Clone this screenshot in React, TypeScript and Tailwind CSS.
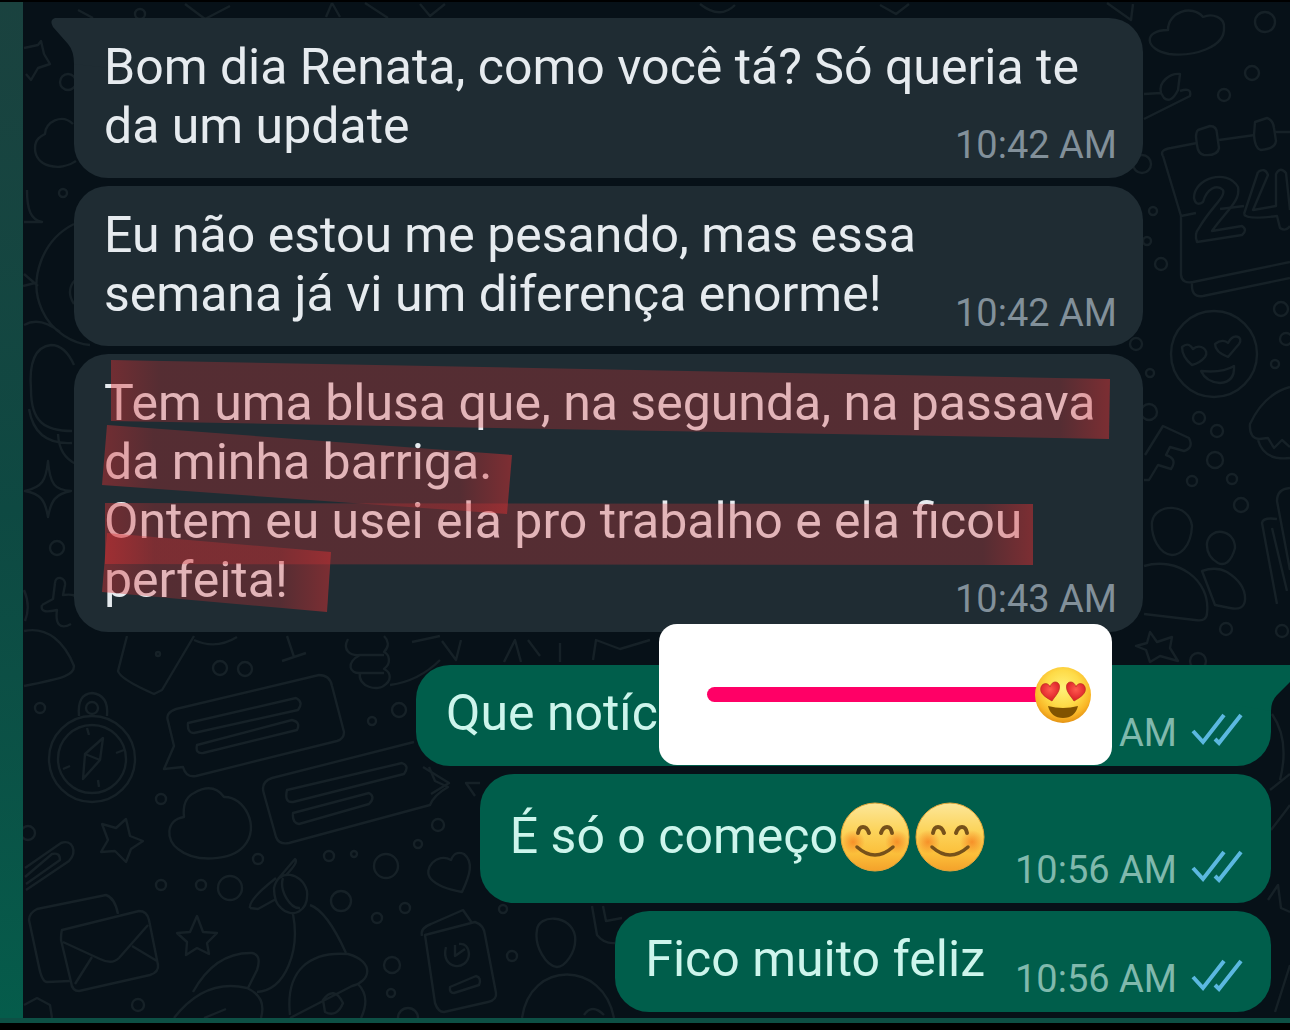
import React from "react";

function CheckMarks() {
  return (
    <svg viewBox="0 0 52 34" className="mb-[9px] h-[34px] w-[52px] shrink-0" fill="none" stroke="#5bb8e0" strokeWidth="4" aria-label="Lida" role="img">
      <path d="M2 18 L12 29 L33 2" />
      <path d="M24 26 L28 30 L50 2" />
    </svg>
  );
}

function Smile() {
  return (
    <svg viewBox="0 0 70 70" className="h-[70px] w-[70px] shrink-0" role="img" aria-label="Sorriso">
      <defs>
        <linearGradient id="face" x1="0" y1="0" x2="0" y2="1">
          <stop offset="0" stopColor="#fce79a" />
          <stop offset=".4" stopColor="#fcd45c" />
          <stop offset=".75" stopColor="#fbbf3a" />
          <stop offset="1" stopColor="#f4a12a" />
        </linearGradient>
        <radialGradient id="cheek">
          <stop offset="0" stopColor="#f58220" stopOpacity=".8" />
          <stop offset="1" stopColor="#f58220" stopOpacity="0" />
        </radialGradient>
      </defs>
      <circle cx="35" cy="35" r="34" fill="url(#face)" stroke="#e2a63a" strokeWidth="1" />
      <circle cx="13" cy="40" r="12" fill="url(#cheek)" />
      <circle cx="57" cy="40" r="12" fill="url(#cheek)" />
      <g fill="none" stroke="#76511a" strokeLinecap="round">
        <path d="M18 31 Q19 25 23 25 Q27 25 29 31" strokeWidth="4" />
        <path d="M41 31 Q43 25 47 25 Q51 25 52 31" strokeWidth="4" />
        <path d="M17 45 Q35 61 53 45" strokeWidth="3.5" />
      </g>
    </svg>
  );
}

function HeartEyes() {
  return (
    <svg viewBox="0 0 56 56" className="pointer-events-none absolute top-1/2 right-[21px] h-[56px] w-[56px] -translate-y-1/2" aria-hidden="true">
      <defs>
        <radialGradient id="love" cx=".5" cy=".38" r=".64">
          <stop offset="0" stopColor="#fff27a" />
          <stop offset=".5" stopColor="#fedb48" />
          <stop offset=".8" stopColor="#f9b526" />
          <stop offset="1" stopColor="#e08c10" />
        </radialGradient>
        <radialGradient id="heart" cx=".5" cy=".4">
          <stop offset="0" stopColor="#ff5a4e" />
          <stop offset="1" stopColor="#e0262c" />
        </radialGradient>
      </defs>
      <circle cx="28" cy="28" r="28" fill="url(#love)" />
      <path d="M17 34 C10 30 4 26 6 20 C8 15 14 16 15 20 C17 13 24 14 24.500 19 C25 25 20 29 17 34Z" fill="url(#heart)" stroke="#b92b20" strokeWidth=".7" />
      <path d="M39 34 C46 30 52 26 50 20 C48 15 42 16 41 20 C39 13 32 14 31.500 19 C31 25 36 29 39 34Z" fill="url(#heart)" stroke="#b92b20" strokeWidth=".7" />
      <path d="M13 39 Q28 43 43 39 Q40 51 28 51 Q16 51 13 39Z" fill="#805300" />
    </svg>
  );
}

const dots: [number, number, number][] = [
  [68, 82, 9], [63, 193, 5], [57, 548, 8], [220, 668, 8], [245, 669, 8], [40, 708, 6], [372, 721, 5], [399, 710, 8],
  [161, 799, 6], [28, 833, 8], [161, 885, 6], [201, 885, 6], [230, 888, 13], [258, 859, 6], [329, 856, 6], [354, 854, 4],
  [386, 866, 13], [341, 901, 11], [377, 918, 6], [405, 908, 6], [392, 965, 9], [391, 993, 5], [138, 1005, 7], [408, 1018, 11],
  [438, 825, 7], [418, 844, 5], [503, 909, 5], [512, 956, 6], [1265, 22, 11], [1252, 73, 8], [1224, 95, 7],
  [1142, 164, 10], [1153, 211, 5], [1147, 241, 5], [1161, 264, 7], [1281, 309, 8], [1136, 344, 7], [1150, 373, 5],
  [1275, 364, 5], [1149, 412, 9], [1199, 418, 7], [1217, 431, 7], [1215, 460, 9], [1192, 481, 6], [1232, 479, 6],
  [1241, 505, 8], [1226, 629, 7], [1282, 631, 7], [1198, 661, 9], [1286, 339, 7], [158, 654, 3], [140, 14, 6],
];

const shapes = [
  // star, cloud, crescent and arcs along the left edge
  "M24 48 L38 45 L41 41 L44 54 L50 64 L38 68 L31 80 L26 74",
  "M76 161 C60 172 35 167 35 148 C35 139 41 136 45 134 C45 122 62 113 73 124",
  "M27 190 C27 210 31 220 42 222 H24 M74 224 C42 240 28 280 42 310 C52 333 75 344 90 345 M23 286 L35 283 M24 274 L38 286 M24 325 Q40 316 60 332 M76 279 Q65 290 74 304",
  "M74 365 Q65 345 51 345 C34 347 29 365 31 390 C31 422 45 431 72 431 M29 409 Q35 445 72 443 M58 434 Q59 456 76 464",
  "M48 461 C50 485 55 490 71 491 C55 494 51 501 48 517 C45 499 40 494 25 491 C42 487 46 481 48 461Z",
  "M55 583 C55 575 66 577 65 585 L63 595 C73 594 77 595 76 600 M42 605 C40 613 48 612 57 610 C55 624 60 630 71 624 M42 605 L53 599 L55 583 M24 590 Q31 606 25 621",
  "M24 631 C48 626 65 643 74 666 C74 675 65 678 24 686 M127 636 L118 671 Q120 679 154 694 L162 690 L194 636 M194 640 Q216 650 237 637 M287 636 L294 657 M282 661 L306 653",
  "M348 639 C342 650 350 656 360 655 C345 663 350 674 360 673 C357 686 378 693 386 684 C393 678 389 671 384 669 C392 663 389 654 384 652 C390 646 388 640 384 636 M360 655 H384 M360 673 H384 M390 685 Q419 681 440 660 M412 642 L440 636",
  // top edge
  "M78 10 L93 18 M185 4 L205 19 L230 6 M332 3 L326 17 M332 3 L340 17 M365 3 L388 18 M1107 3 L1131 20 L1133 4 M420 4 L430 16 L445 4 M700 4 Q720 20 735 5 M880 5 L896 14 L909 4",
  // compass
  "M79 716 Q77 694 92 693 Q109 695 107 716",
  "M103 738 L100 760 L83 779 L85 754Z M85 754 L100 760 M87 728 L89 735 M124 750 L116 753 M99 787 L98 780 M63 769 L70 766",
  // speech bubbles
  "M168 721 Q165 713 176 709 L319 675 Q330 675 332 686 L344 732 Q344 739 337 741 L196 776 Q186 778 183 767 L164 769 L174 746Z",
  "M188 723 L296 698 Q304 702 298 710 L194 733 Q187 733 188 723Z M197 745 L292 720 Q301 722 297 730 L203 753 Q195 754 197 745Z",
  "M414 742 L272 778 Q260 782 264 794 L276 837 Q279 845 289 843 L430 805 Q434 795 448 787 L435 781 L429 767",
  "M287 790 L402 763 Q410 766 404 774 L293 802 Q284 803 287 790Z M293 813 L369 793 Q376 797 369 804 L299 824 Q292 823 293 813Z",
  "M184 817 C165 820 166 841 178 849 C195 863 231 861 244 846 C261 827 244 796 224 797 Q213 782 194 793 C184 798 183 808 184 817Z",
  "M126 819 L130 836 L143 841 L131 849 L126 862 L115 851 L101 852 L108 840 L102 824 L116 828Z",
  "M197 916 L203 932 L217 933 L207 943 L209 954 L197 948 L186 955 L187 942 L177 933 L190 932Z",
  "M25 868 L61 843 C72 839 78 851 69 861 L26 890 M25 877 L52 854 Q60 852 60 860 L26 884",
  // envelope
  "M70 981 L47 982 Q42 982 39 967 L29 920 Q29 913 37 909 L106 895 Q115 898 118 914",
  "M62 930 L139 911 Q147 911 149 920 L158 965 Q159 972 150 975 L79 991 Q72 991 71 982 L61 940 Q61 933 62 930Z M63 942 L100 959 Q112 965 119 958 L148 925 M75 984 L92 957 M132 946 L157 961",
  // microphone, figures and notebook
  "M250 908 Q248 900 276 878 M250 908 L258 909 L276 899 M278 879 L295 859 Q299 862 286 875 M274 888 C278 868 302 872 307 891 C309 912 292 919 281 908 C276 904 274 898 274 888Z M283 878 C279 890 290 909 300 908 M293 914 C300 950 286 990 257 992 M310 905 Q327 911 346 953",
  "M174 1018 Q205 978 247 988 Q267 997 261 1018 M193 992 Q215 952 252 953 Q262 955 257 970 L248 988 M204 1018 L226 1009 M290 1015 C285 970 310 951 348 954 C376 962 370 982 352 986 L290 1018 M358 984 Q371 997 361 1018 M323 1000 Q334 985 343 1003 Q337 1018 325 1012Z",
  "M422 936 Q420 928 431 924 L463 910 L472 923 M425 935 L475 922 Q484 925 485 935 L496 993 Q497 1000 488 1002 L444 1012 Q438 1012 435 1003Z M450 987 L476 976 Q482 978 479 985 L454 993 Q449 993 450 987Z M446 947 C440 970 468 972 469 954 Q468 943 459 944 M455 945 V956 L465 949",
  "M537 930 C538 914 571 914 575 936 C577 953 564 967 557 967 C546 966 534 946 537 930Z M522 1018 C530 960 603 960 614 1018 M584 1015 Q592 1003 604 1015",
  "M451 860 C437 852 422 869 431 879 Q439 888 462 892 C470 875 474 862 464 854 Q455 850 451 860Z",
  "M592 906 L597 935 Q604 944 615 943 M603 906 L606 921 L622 918 M423 767 L449 783 L431 794 M480 783 H466 L475 796",
  "M24 1005 L37 998 L50 1005 L52 1018 M442 641 L456 660 L461 640 M504 662 L515 640 L521 662 M528 640 L540 656 M560 643 V662 M593 660 L596 640 L620 649 L650 640",
  // cloud, leaf and calendar
  "M1168 30 C1142 30 1145 50 1169 54 C1194 57 1225 47 1224 28 C1225 17 1212 13 1203 17 C1192 4 1168 12 1168 30Z",
  "M1144 94 L1161 93 C1158 82 1170 73 1180 74 L1178 90 Q1171 104 1164 98 L1161 93 M1180 91 Q1192 87 1190 96 L1144 119",
  "M1163 156 Q1159 150 1171 148 L1197 143 M1219 140 L1255 135 M1275 132 H1290 M1163 156 L1181 216 V275 Q1182 284 1193 282 L1290 262 M1192 283 Q1191 298 1203 296 L1290 278 M1181 216 L1196 213 M1220 209 L1244 206",
  "M1198 130 L1210 126 Q1217 126 1217 134 L1219 148 Q1218 156 1204 155 Q1198 154 1197 145 L1196 137 Q1196 132 1198 130Z M1255 122 L1267 118 Q1273 120 1274 128 L1276 141 Q1275 149 1261 150 Q1255 149 1254 135Z",
  "M1194 198 C1194 178 1227 168 1238 187 C1241 201 1226 211 1212 231 L1242 226 Q1248 230 1242 235 L1197 242 Q1194 234 1199 228 C1211 207 1226 197 1223 190 C1217 184 1207 188 1203 202 Q1196 207 1194 198Z",
  "M1258 172 Q1265 167 1268 175 L1253 210 L1276 206 V174 Q1280 166 1286 173 L1290 210 M1244 214 Q1246 220 1277 216 L1280 228 Q1286 232 1290 226 M1258 172 L1244 214",
  // heart-eyed face, cookie, key and people
  "M1182 347 C1188 342 1191 346 1193 349 C1200 343 1210 350 1205 357 Q1200 363 1192 365 Q1182 357 1182 347Z M1215 344 C1221 339 1226 341 1228 343 C1234 332 1244 337 1239 344 L1228 357 Q1215 352 1215 344Z M1201 371 Q1223 373 1234 366 Q1235 382 1220 383 Q1206 382 1201 371Z",
  "M1290 387 Q1264 394 1250 424 Q1249 438 1259 439 L1268 438 L1274 448 L1282 440 L1290 447 M1258 440 Q1264 461 1290 458",
  "M1145 455 L1163 426 L1189 438 Q1194 448 1184 451 L1170 447 L1166 455 Q1178 459 1171 469 L1158 465 L1149 480 L1144 480",
  "M1152 522 C1155 503 1189 502 1192 526 C1191 548 1179 555 1172 555 C1159 554 1151 537 1152 522Z M1144 566 C1177 556 1211 580 1207 613 Q1207 622 1195 620 L1144 614 M1207 543 C1210 526 1235 529 1235 548 C1231 563 1224 566 1218 563 Q1206 556 1207 543Z M1202 571 Q1216 566 1227 572 Q1246 584 1245 600 Q1244 611 1230 608 L1215 605Z",
  "M1277 604 L1262 523 Q1263 517 1277 519 M1290 488 Q1277 489 1277 501 L1290 570 M1272 528 L1287 591 M1150 632 L1157 642 L1172 637 L1170 648 L1178 661 L1160 656 L1150 662 L1146 650 L1136 646 L1147 643Z",
  // right edge, lower part
  "M1272 714 Q1290 740 1280 780 M1271 830 Q1285 812 1290 805 M1268 900 L1278 885 L1281 908 L1290 912 M1275 1012 L1290 965 M1270 790 L1290 774",
];

function Doodles() {
  return (
    <svg
      className="pointer-events-none absolute inset-0 h-full w-full"
      viewBox="23 2 1267 1016"
      preserveAspectRatio="xMinYMin slice"
      fill="none"
      stroke="#162127"
      strokeWidth="2.4"
      strokeLinejoin="round"
      aria-hidden="true"
    >
      {shapes.map((d) => (
        <path key={d} d={d} />
      ))}
      {dots.map(([x, y, r]) => (
        <circle key={`${x}-${y}`} cx={x} cy={y} r={r - 1} />
      ))}
      <circle cx="92" cy="708" r="6" />
      <circle cx="92" cy="759" r="43" />
      <circle cx="92" cy="759" r="34" />
      <circle cx="1214" cy="354" r="43" />
    </svg>
  );
}

function Highlights() {
  const bars = [
    { id: "h1", points: "37,6 1036,25 1035,85 37,67", x1: 37, x2: 1036 },
    { id: "h2", points: "33,71 438,101 433,160 28,131", x1: 30, x2: 436 },
    { id: "h3", points: "31,149 959,150 959,211 31,210", x1: 31, x2: 959 },
    { id: "h4", points: "33,179 257,198 253,258 28,238", x1: 30, x2: 256 },
  ];
  return (
    <svg className="pointer-events-none absolute top-0 left-0 h-[278px] w-[1069px]" viewBox="0 0 1069 278" aria-hidden="true">
      {bars.map((b) => {
        const edge = 50 / (b.x2 - b.x1);
        return (
          <g key={b.id}>
            <linearGradient id={b.id} gradientUnits="userSpaceOnUse" x1={b.x1} x2={b.x2} y1="0" y2="0">
              <stop offset="0" stopColor="#d93033" stopOpacity=".44" />
              <stop offset={edge} stopColor="#d93033" stopOpacity=".29" />
              <stop offset={1 - edge} stopColor="#d93033" stopOpacity=".29" />
              <stop offset="1" stopColor="#d93033" stopOpacity=".5" />
            </linearGradient>
            <polygon points={b.points} fill={`url(#${b.id})`} />
          </g>
        );
      })}
    </svg>
  );
}

function Received({ lines, time, tail, marked }: { lines: string[]; time: string; tail?: boolean; marked?: boolean }) {
  return (
    <div className="relative flow-root w-full max-w-[1069px] rounded-[34px] bg-[#1f2c33] pt-5 pr-[26px] pb-[10px] pl-[30px]">
      {tail && (
        <svg viewBox="0 0 60 50" className="absolute top-0 -left-6 h-[50px] w-[60px]" fill="#1f2c33" aria-hidden="true">
          <path d="M60 0 H5 Q-1 2 3 9 L18 26 Q24 33 24 46 L60 50Z" />
        </svg>
      )}
      <p className="relative flow-root text-[50px] leading-[59px] text-[#e6ebef]">
        {lines.slice(0, -1).map((line) => (
          <span key={line} className="block">
            {line}
          </span>
        ))}
        <span>{lines[lines.length - 1]}</span>
        <time className="float-right mt-[25px] text-[38px] leading-[46px] text-[#82909a]">{time}</time>
      </p>
      {marked && <Highlights />}
    </div>
  );
}

function Sent({ children, time }: { children: React.ReactNode; time: string }) {
  return (
    <div className="flex w-fit items-end gap-[30px] rounded-[34px] bg-[#005e4b] pt-[19px] pr-[28px] pb-[10px] pl-[30px]">
      <p className="mb-[13px] flex items-center text-[50px] leading-[59px] text-[#cdf5ec]">{children}</p>
      <div className="flex items-end gap-[14px]">
        <time className="text-[38px] leading-[46px] text-[#80b9ad]">{time}</time>
        <CheckMarks />
      </div>
    </div>
  );
}

function ReactionSlider() {
  return (
    <div className="absolute -top-[41px] right-[159px] flex h-[141px] w-[453px] items-center rounded-[18px] bg-white pr-[48px] pl-[48px]">
      <input
        type="range"
        aria-label="Reação"
        min={0}
        max={100}
        defaultValue={100}
        className="h-[15px] w-full appearance-none rounded-full bg-[#ff0066] outline-none [&::-webkit-slider-thumb]:h-[15px] [&::-webkit-slider-thumb]:w-[15px] [&::-webkit-slider-thumb]:appearance-none"
      />
      <HeartEyes />
    </div>
  );
}

export default function App() {
  return (
    <div className="min-h-screen bg-black pt-[2px] font-['Roboto',sans-serif]">
      <div className="flex bg-gradient-to-b from-[#1a423f] via-[#0e4942] to-[#055c4b]">
        <div className="w-[23px] shrink-0" />
        <main className="relative min-w-0 flex-1 overflow-hidden bg-[#071118] pt-4 pr-[19px] pb-[6px] pl-[51px]">
          <Doodles />
          <div className="relative flex flex-col gap-2">
            <Received tail time="10:42 AM" lines={["Bom dia Renata, como você tá? Só queria te", "da um update"]} />
            <Received time="10:42 AM" lines={["Eu não estou me pesando, mas essa", "semana já vi um diferença enorme!"]} />
            <Received
              marked
              time="10:43 AM"
              lines={[
                "Tem uma blusa que, na segunda, na passava",
                "da minha barriga.",
                "Ontem eu usei ela pro trabalho e ela ficou",
                "perfeita!",
              ]}
            />
          </div>
          <div className="relative mt-[33px] flex flex-col items-end gap-2">
            <div className="relative flex w-full max-w-[855px] items-end justify-between rounded-[34px] bg-[#005e4b] pt-[19px] pr-[28px] pb-[10px] pl-[30px]">
              <svg viewBox="0 0 60 46" className="absolute top-0 -right-6 h-[46px] w-[60px]" fill="#005e4b" aria-hidden="true">
                <path d="M0 0 H60 V12 L42 30 Q36 36 36 46 L0 40Z" />
              </svg>
              <p className="mb-[13px] text-[50px] leading-[59px] text-[#cdf5ec]">Que notíc</p>
              <div className="relative flex items-end gap-[14px]">
                <time className="text-[38px] leading-[46px] text-[#80b9ad]">AM</time>
                <CheckMarks />
              </div>
              <ReactionSlider />
            </div>
            <Sent time="10:56 AM">
              <span className="py-[14px]">É só o começo</span>
              <span className="flex gap-[5px] pl-[2px]">
                <Smile />
                <Smile />
              </span>
            </Sent>
            <Sent time="10:56 AM">Fico muito feliz</Sent>
          </div>
        </main>
      </div>
      <div className="h-[5px] bg-[#0d5045]" />
    </div>
  );
}
